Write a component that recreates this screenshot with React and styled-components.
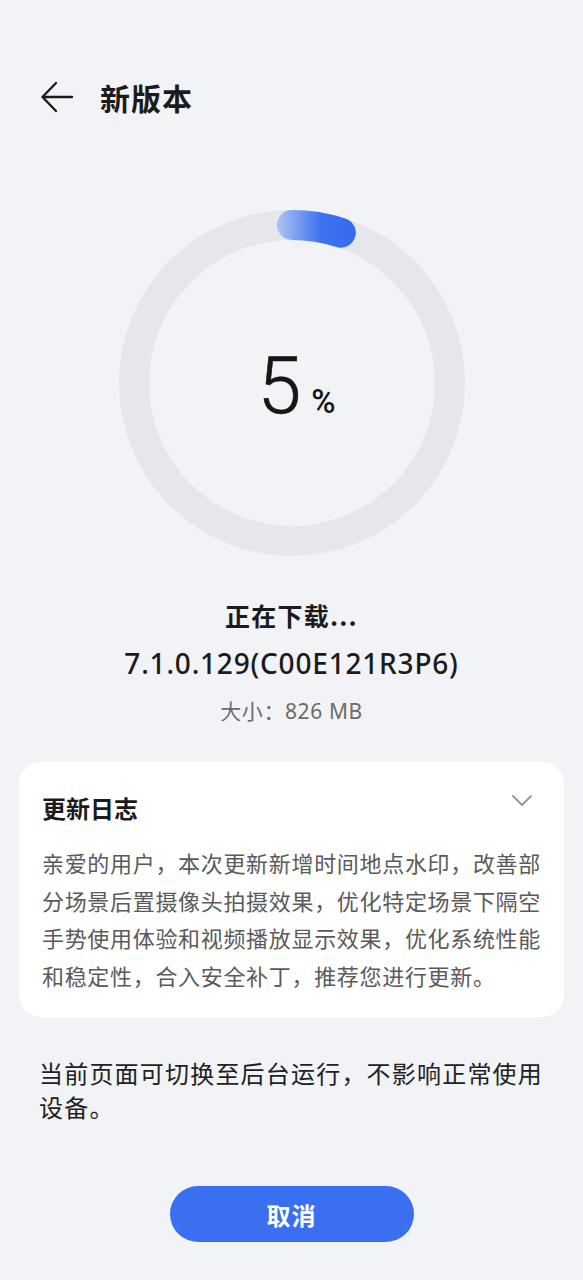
import React from 'react';
import styled, { createGlobalStyle } from 'styled-components';

const GlobalStyle = createGlobalStyle`
  body {
    margin: 0;
    background: #f1f3f6;
    font-family: 'Noto Sans', 'Noto Sans CJK SC', sans-serif;
  }
`;

const Page = styled.div`
  width: 583px;
  min-height: 1280px;
  display: flex;
  flex-direction: column;
  align-items: center;
  background: #f1f3f6;
`;

const Header = styled.header`
  align-self: stretch;
  display: flex;
  align-items: center;
  gap: 26px;
  padding: 76px 0 0 40px;
  height: 42px;
`;

const BackButton = styled.button`
  border: none;
  background: none;
  padding: 0;
  width: 34px;
  height: 34px;
  display: flex;
  align-items: center;
  justify-content: center;
  color: #1b1b1b;
`;

const Title = styled.h1`
  margin: 0;
  font-family: 'Noto Sans CJK SC', sans-serif;
  font-size: 30px;
  font-weight: 700;
  line-height: 42px;
  letter-spacing: 1px;
  color: #1b1b1b;
`;

const Ring = styled.div`
  margin-top: 92px;
  width: 346px;
  height: 346px;
  position: relative;
  display: flex;
  align-items: center;
  justify-content: center;
  & > svg {
    position: absolute;
    inset: 0;
  }
`;

const Percent = styled.div`
  position: relative;
  display: flex;
  align-items: baseline;
  gap: 10px;
  color: #161616;
  font-family: Roboto, 'Noto Sans', sans-serif;
  margin: 6px 0 0 10px;
`;

const Big = styled.span`
  font-size: 79px;
  font-weight: 300;
  line-height: 1;
  -webkit-text-stroke: 0.6px #161616;
`;

const Small = styled.span`
  font-size: 33px;
  font-weight: 500;
`;

const Status = styled.div`
  margin-top: 35px;
  font-family: 'Noto Sans CJK SC', sans-serif;
  font-size: 25px;
  font-weight: 700;
  letter-spacing: 1.2px;
  line-height: 48px;
  color: #1b1b1b;
`;

const Version = styled.div`
  font-family: 'Noto Sans', 'Noto Sans CJK SC', sans-serif;
  font-size: 28px;
  font-weight: 500;
  letter-spacing: 0.8px;
  line-height: 48px;
  color: #1b1b1b;
`;

const Size = styled.div`
  font-family: 'Noto Sans', 'Noto Sans CJK SC', sans-serif;
  font-size: 21px;
  letter-spacing: 0.6px;
  line-height: 48px;
  color: #6b6b6b;
`;

const Card = styled.section`
  align-self: stretch;
  margin: 27px 19px 0;
  background: #fff;
  border-radius: 22px;
  padding: 24px 23px 23px;
`;

const CardHead = styled.div`
  display: flex;
  justify-content: space-between;
  align-items: flex-start;
`;

const CardTitle = styled.h2`
  margin: 0;
  font-family: 'Noto Sans CJK SC', sans-serif;
  font-size: 24px;
  font-weight: 700;
  line-height: 44px;
  color: #1b1b1b;
`;

const Chevron = styled.svg`
  margin: 8px 8px 0 0;
  color: #9a9a9a;
`;

const CardBody = styled.p`
  margin: 14px 0 0;
  width: 504px;
  font-family: 'Noto Sans CJK SC', sans-serif;
  font-size: 22px;
  letter-spacing: 0.68px;
  line-height: 37.5px;
  color: #5a5a5a;
`;

const Note = styled.p`
  align-self: stretch;
  margin: 39px 0 0;
  padding: 0 30px 0 39px;
  font-family: 'Noto Sans CJK SC', sans-serif;
  font-size: 24px;
  letter-spacing: 1.2px;
  line-height: 34px;
  color: #222;
`;

const CancelButton = styled.button`
  margin-top: 62px;
  width: 244px;
  height: 56px;
  border: none;
  border-radius: 28px;
  background: #3b6ff2;
  color: #fff;
  font-family: 'Noto Sans CJK SC', sans-serif;
  font-size: 24px;
  font-weight: 700;
  letter-spacing: 1px;
`;

function ProgressRing({ value }) {
  const r = 158;
  const c = 173;
  const a = (value / 100) * Math.PI * 2;
  const x = c + r * Math.sin(a);
  const y = c - r * Math.cos(a);
  return (
    <svg width="346" height="346" viewBox="0 0 346 346">
      <defs>
        <linearGradient id="arc" x1="160" y1="0" x2="230" y2="0" gradientUnits="userSpaceOnUse">
          <stop offset="0" stopColor="#a8c0f2" />
          <stop offset="0.6" stopColor="#3f72f2" />
          <stop offset="1" stopColor="#386cf0" />
        </linearGradient>
      </defs>
      <circle cx={c} cy={c} r={r} fill="none" stroke="#e6e7ea" strokeWidth="30" />
      <path
        d={`M ${c} ${c - r} A ${r} ${r} 0 0 1 ${x} ${y}`}
        fill="none"
        stroke="url(#arc)"
        strokeWidth="30"
        strokeLinecap="round"
      />
    </svg>
  );
}

export default function App() {
  return (
    <Page>
      <GlobalStyle />
      <Header>
        <BackButton aria-label="返回">
          <svg width="34" height="34" viewBox="0 0 34 34" fill="none" stroke="currentColor" strokeWidth="2.4" strokeLinecap="round" strokeLinejoin="round">
            <path d="M32 17H3" />
            <path d="M16 3L2.5 17L16 31" />
          </svg>
        </BackButton>
        <Title>新版本</Title>
      </Header>

      <Ring>
        <ProgressRing value={5} />
        <Percent>
          <Big>5</Big>
          <Small>%</Small>
        </Percent>
      </Ring>

      <Status>正在下载...</Status>
      <Version>7.1.0.129(C00E121R3P6)</Version>
      <Size>大小：826 MB</Size>

      <Card>
        <CardHead>
          <CardTitle>更新日志</CardTitle>
          <Chevron width="22" height="14" viewBox="0 0 22 14" fill="none" stroke="currentColor" strokeWidth="2" strokeLinecap="round" strokeLinejoin="round">
            <path d="M2 2L11 11L20 2" />
          </Chevron>
        </CardHead>
        <CardBody>
          亲爱的用户，本次更新新增时间地点水印，改善部分场景后置摄像头拍摄效果，优化特定场景下隔空手势使用体验和视频播放显示效果，优化系统性能和稳定性，合入安全补丁，推荐您进行更新。
        </CardBody>
      </Card>

      <Note>当前页面可切换至后台运行，不影响正常使用设备。</Note>

      <CancelButton>取消</CancelButton>
    </Page>
  );
}
